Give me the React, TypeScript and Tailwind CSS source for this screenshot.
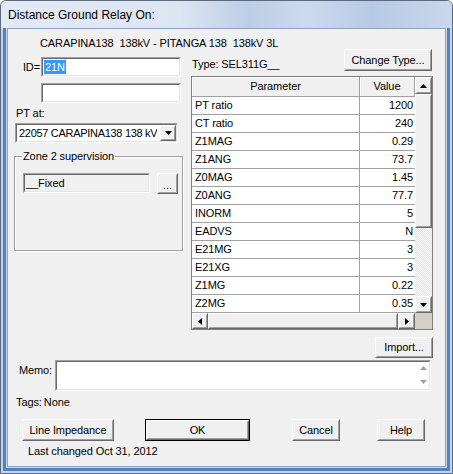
import React from "react";

const rows: [string, string][] = [
  ["PT ratio", "1200"],
  ["CT ratio", "240"],
  ["Z1MAG", "0.29"],
  ["Z1ANG", "73.7"],
  ["Z0MAG", "1.45"],
  ["Z0ANG", "77.7"],
  ["INORM", "5"],
  ["EADVS", "N"],
  ["E21MG", "3"],
  ["E21XG", "3"],
  ["Z1MG", "0.22"],
  ["Z2MG", "0.35"],
];

type Dir = "up" | "down" | "left" | "right";

function Tri({ dir, color = "#000" }: { dir: Dir; color?: string }) {
  const pts: Record<Dir, string> = {
    up: "0,4 3.5,0 7,4",
    down: "0,0 7,0 3.5,4",
    left: "4,0 4,7 0,3.5",
    right: "0,0 0,7 4,3.5",
  };
  const vert = dir === "up" || dir === "down";
  const w = vert ? 7 : 4;
  const h = vert ? 4 : 7;
  return (
    <svg width={w} height={h} viewBox={`0 0 ${w} ${h}`}>
      <polygon points={pts[dir]} fill={color} />
    </svg>
  );
}

function Raised({ className = "", children }: { className?: string; children?: React.ReactNode }) {
  return (
    <div className={`border border-t-white border-l-white border-r-[#696969] border-b-[#696969] bg-[#f0f0f0] ${className}`}>
      <div className="flex h-full w-full items-center justify-center border border-t-[#f0f0f0] border-l-[#f0f0f0] border-r-[#a0a0a0] border-b-[#a0a0a0]">
        {children}
      </div>
    </div>
  );
}

function Sunken({
  className = "",
  inner = "bg-white",
  children,
}: {
  className?: string;
  inner?: string;
  children?: React.ReactNode;
}) {
  return (
    <div className={`border border-t-[#a0a0a0] border-l-[#a0a0a0] border-r-white border-b-white ${className}`}>
      <div className={`flex h-full w-full items-center border border-t-[#696969] border-l-[#696969] border-r-[#e3e3e3] border-b-[#e3e3e3] ${inner}`}>
        {children}
      </div>
    </div>
  );
}

function HeaderCell({ className = "", children }: { className?: string; children: React.ReactNode }) {
  return (
    <div className={`flex items-center justify-center border-r border-b border-[#a0a0a0] bg-[#f0f0f0] shadow-[inset_1px_1px_0_#fff] ${className}`}>
      {children}
    </div>
  );
}

function Grid() {
  return (
    <div className="h-[254px] w-[242px] border border-[#7f7f7f] bg-white">
      <div className="flex">
        <div className="w-[223px]">
          <div className="flex h-[20px]">
            <HeaderCell className="w-[168px]">Parameter</HeaderCell>
            <HeaderCell className="w-[55px]">Value</HeaderCell>
          </div>
          {rows.map(([p, v]) => (
            <div key={p} className="flex h-[18px] border-b border-[#a0a0a0]">
              <div className="w-[168px] border-r border-[#a0a0a0] pl-[3px] leading-[17px]">{p}</div>
              <div className="w-[55px] pr-[2px] text-right leading-[17px]">{v}</div>
            </div>
          ))}
        </div>
        <div className="flex h-[236px] w-[17px] flex-col">
          <Raised className="h-[17px]">
            <Tri dir="up" />
          </Raised>
          <Raised className="h-[134px]" />
          <div className="flex-1 bg-[image:repeating-conic-gradient(#ffffff_0%_25%,#e2e2e2_0%_50%)] bg-[length:2px_2px]" />
          <Raised className="h-[17px]">
            <Tri dir="down" />
          </Raised>
        </div>
      </div>
      <div className="flex h-[16px]">
        <Raised className="w-[16px]">
          <Tri dir="left" />
        </Raised>
        <Raised className="w-[190px]" />
        <Raised className="w-[17px]">
          <Tri dir="right" />
        </Raised>
        <div className="w-[17px] bg-[#d4d0c8]" />
      </div>
    </div>
  );
}

export default function App() {
  return (
    <div className="h-[474px] w-[453px] overflow-hidden rounded-t-[6px] border border-[#5b6a7e] bg-[#c3d4ea] font-['Liberation_Sans',Arial,sans-serif]">
      <div className="flex h-full flex-col">
        {/* title bar */}
        <div className="flex h-[27px] items-center bg-[linear-gradient(to_right,#e3eaf5_0%,#dce5f2_40%,#bccee6_55%,#cddaee_68%,#b7cae4_82%,#c8d7ec_100%)] pl-[7px] text-[12px] text-black">
          Distance Ground Relay On:
        </div>

        <div className="flex flex-1 flex-col px-[2px] pb-[2px]">
          <div className="flex flex-1 flex-col border-x-[3px] border-b-[3px] border-[#5580c0] bg-[#c9d8ed] px-[1px] pb-[1px]">
            {/* client area */}
            <div className="flex-1 border border-[#8ea3c0] bg-[#f0f0f0] text-[11px] leading-[13px] tracking-[-0.1px] text-black">
              <div className="h-[20px] pl-[32px] pt-[8px]">CARAPINA138&nbsp; 138kV - PITANGA 138&nbsp; 138kV 3L</div>

              <div className="flex pl-[6px]">
                {/* left column */}
                <div className="flex w-[169px] flex-col">
                  <div className="mt-[8px] flex h-[20px] items-center">
                    <div className="w-[27px] pr-[1px] text-right">ID=</div>
                    <Sunken className="h-[20px] w-[140px]">
                      <span className="ml-[1px] bg-[#3399ff] px-[1px] leading-[14px] text-white">21N</span>
                    </Sunken>
                  </div>
                  <Sunken className="ml-[27px] mt-[6px] h-[20px] w-[140px]" />
                  <div className="ml-[2px] mt-[4px]">PT at:</div>
                  <Sunken className="ml-[1px] mt-[3px] h-[20px] w-[163px]" inner="bg-white justify-between">
                    <span className="overflow-hidden whitespace-nowrap pl-[2px] tracking-[-0.3px]">22057 CARAPINA138 138 kV</span>
                    <Raised className="h-[16px] w-[16px] shrink-0">
                      <Tri dir="down" />
                    </Raised>
                  </Sunken>
                  <fieldset className="mt-[7px] h-[101px] w-[169px] border border-[#a0a0a0] shadow-[inset_1px_1px_0_#fff,1px_1px_0_#fff]">
                    <legend className="ml-[7px] px-[1px] leading-[13px]">Zone 2 supervision</legend>
                    <div className="ml-[8px] mt-[10px] flex items-start">
                      <Sunken className="h-[20px] w-[127px]" inner="bg-[#f0f0f0]">
                        <span className="pl-[1px]">__Fixed</span>
                      </Sunken>
                      <Raised className="ml-[7px] h-[21px] w-[21px]">
                        <span className="pt-[3px] text-[11px]">...</span>
                      </Raised>
                    </div>
                  </fieldset>
                </div>

                {/* right column */}
                <div className="ml-[8px] flex w-[242px] flex-col">
                  <div className="flex h-[22px] items-end justify-between">
                    <span className="pl-[1px]">Type: SEL311G__</span>
                    <Raised className="mr-[1px] h-[22px] w-[88px]">Change Type...</Raised>
                  </div>
                  <div className="mt-[5px]">
                    <Grid />
                  </div>
                  <div className="mt-[7px] flex justify-end">
                    <Raised className="h-[21px] w-[58px]">Import...</Raised>
                  </div>
                </div>
              </div>

              <div className="mt-[2px] flex">
                <div className="w-[47px] pr-[3px] pt-[4px] text-right">Memo:</div>
                <Sunken className="h-[31px] w-[376px]" inner="bg-white justify-end items-stretch">
                  <div className="flex w-[12px] flex-col items-center justify-between pb-[5px] pt-[4px]">
                    <Tri dir="up" color="#a0a0a0" />
                    <Tri dir="down" color="#a0a0a0" />
                  </div>
                </Sunken>
              </div>

              <div className="mt-[5px] pl-[8px]">
                Tags:<span className="ml-[2px]">None</span>
              </div>

              <div className="mt-[10px] flex pl-[14px]">
                <Raised className="h-[22px] w-[92px]">Line Impedance</Raised>
                <div className="ml-[31px] h-[22px] w-[105px] border border-black">
                  <Raised className="h-full w-full">OK</Raised>
                </div>
                <Raised className="ml-[42px] h-[22px] w-[48px]">Cancel</Raised>
                <Raised className="ml-[37px] h-[22px] w-[48px]">Help</Raised>
              </div>

              <div className="mt-[4px] pl-[20px]">Last changed Oct 31, 2012</div>
            </div>
          </div>
        </div>
      </div>
    </div>
  );
}
